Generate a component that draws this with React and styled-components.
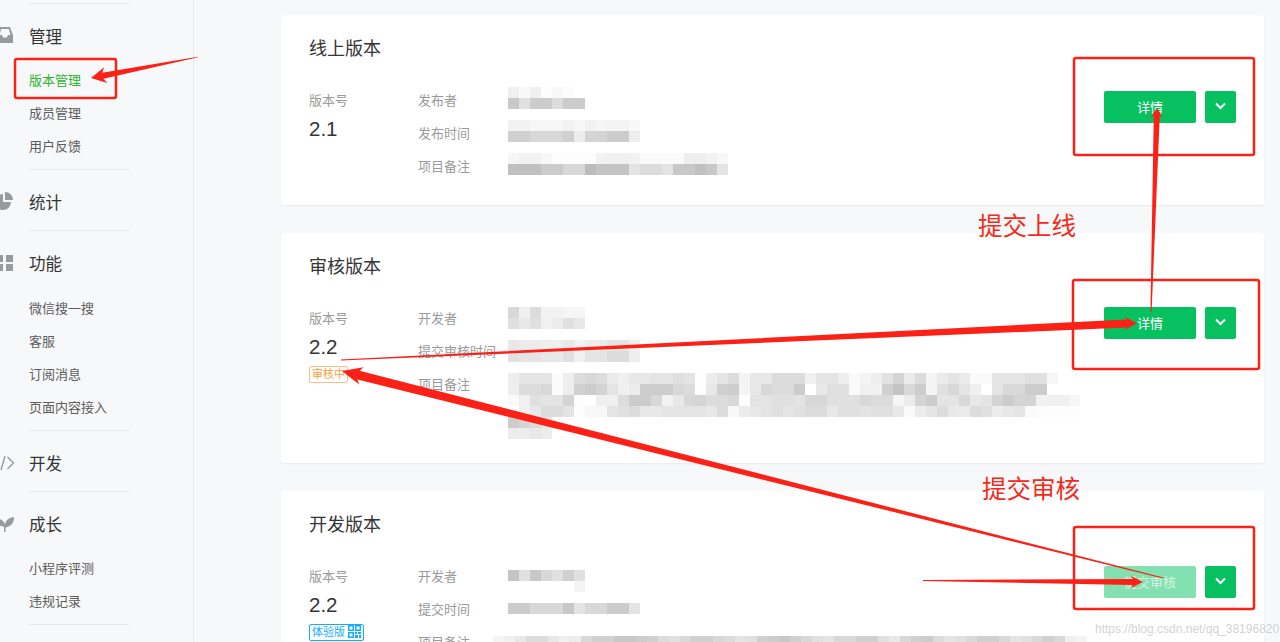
import React from "react";
import styled, { createGlobalStyle } from "styled-components";

const GlobalStyle = createGlobalStyle`
  html, body {
    margin: 0;
    height: 642px;
    overflow: hidden;
    background: #f6f8f9;
  }
  body {
    font-family: "Noto Sans CJK SC", "Noto Sans", sans-serif;
  }
`;

const Page = styled.div`
  position: relative;
  display: flex;
  width: 1280px;
  height: 642px;
  overflow: hidden;
  background: #f6f8f9;
`;

const Sidebar = styled.nav`
  flex: none;
  width: 193px;
  height: 100%;
  box-sizing: content-box;
  padding-top: 3px;
  border-right: 1px solid #e7e8ec;
`;

const Section = styled.section`
  margin-left: 29px;
  width: 100px;
  border-top: 1px solid #e7e7eb;
  padding-top: 18px;
`;

const Heading = styled.div`
  display: flex;
  align-items: center;
  height: 28px;
  margin: 0 0 14px -29px;
  width: 129px;
  font-size: 16.5px;
  color: #353535;
  white-space: nowrap;
`;

const IconSlot = styled.span`
  display: flex;
  flex: none;
  width: 29px;
  height: 28px;
  align-items: center;
  color: #9a9a9a;
`;

const SubList = styled.div`
  padding: ${(p) => p.$lead}px 0 5px;
`;

const SubItem = styled.div`
  height: 33px;
  line-height: 30px;
  font-size: 13px;
  white-space: nowrap;
  color: ${(p) => (p.$active ? "#2fb52f" : "#5c5c5c")};
`;

const Main = styled.main`
  flex: none;
  width: 983px;
  margin-left: 87px;
  padding-top: 15px;
  display: flex;
  flex-direction: column;
  gap: 28px;
`;

const Card = styled.article`
  flex: none;
  box-sizing: border-box;
  height: ${(p) => p.$height}px;
  padding: 22px 28px;
  background: #fff;
  border-radius: 3px;
  box-shadow: 0 1px 2px rgba(0, 0, 0, 0.06);
`;

const CardTitle = styled.h2`
  height: 24px;
  margin: 0 0 24px;
  font-size: 18px;
  font-weight: 400;
  line-height: 21px;
  color: #353535;
`;

const CardBody = styled.div`
  display: flex;
  align-items: flex-start;
`;

const VersionCol = styled.div`
  flex: none;
  width: 109px;
`;

const Label = styled.div`
  flex: none;
  width: 90px;
  height: 33px;
  line-height: 30px;
  font-size: 13px;
  color: #9a9a9a;
  white-space: nowrap;
`;

const VersionNumber = styled.div`
  margin-top: -1px;
  height: 24px;
  line-height: 24px;
  font-family: "Liberation Sans", sans-serif;
  font-size: 20.5px;
  color: #353535;
`;

const Badge = styled.span`
  display: inline-flex;
  align-items: center;
  gap: 3px;
  box-sizing: border-box;
  height: 17px;
  margin-top: 6px;
  padding: 0 2px 1px;
  font-size: 11px;
  line-height: 15px;
  border-radius: 2px;
  border: 1px solid ${(p) => p.$line};
  color: ${(p) => p.$ink};
`;

const Details = styled.div`
  flex: 1;
  min-width: 0;
`;

const DetailRow = styled.div`
  display: flex;
  align-items: flex-start;
  min-height: 33px;
`;

const Mosaic = styled.div`
  display: grid;
  grid-template-columns: repeat(${(p) => p.$cols}, 11px);
  grid-auto-rows: 11px;
  margin: ${(p) => p.$top}px 0 0 ${(p) => p.$left || 0}px;
  filter: blur(0.4px);
`;

const Actions = styled.div`
  flex: none;
  display: flex;
  gap: 9px;
  margin-top: ${(p) => p.$top}px;
`;

const Button = styled.button`
  flex: none;
  width: ${(p) => (p.$small ? "31px" : "92px")};
  height: 32px;
  padding: 0 0 2px;
  display: flex;
  align-items: center;
  justify-content: center;
  border: 0;
  border-radius: 2px;
  background: ${(p) => (p.$disabled ? "#83e0b0" : "#07c160")};
  color: ${(p) => (p.$disabled ? "rgba(255,255,255,0.65)" : "#fff")};
  font-family: inherit;
  font-size: 13px;
`;

const Overlay = styled.svg`
  position: absolute;
  left: 0;
  top: 0;
  pointer-events: none;
`;

const Note = styled.div`
  position: absolute;
  left: ${(p) => p.$x}px;
  top: ${(p) => p.$y}px;
  font-size: 24.5px;
  line-height: 32px;
  color: #f5291a;
  white-space: nowrap;
`;

const Watermark = styled.div`
  position: absolute;
  left: 1095px;
  top: 621px;
  font-family: "Liberation Sans", sans-serif;
  font-size: 12px;
  line-height: 17px;
  color: rgba(190, 190, 190, 0.7);
  white-space: nowrap;
`;

const InboxIcon = () => (
  <svg width="16" height="16" viewBox="0 0 16 16" style={{ margin: "-2px 0 0 -3px" }}>
    <path fill="currentColor" d="M3 0h10l3 8v8H0V8zM2.5 8H5l1.2 2.5h3.6L11 8h2.5L11.8 2H4.2z" fillRule="evenodd" />
  </svg>
);

const PieIcon = () => (
  <svg width="18" height="18" viewBox="0 0 18 18" style={{ margin: "-2px 0 0 -5px" }}>
    <path fill="currentColor" d="M8 2v8h8a8 8 0 1 1-8-8zM10 0a8 8 0 0 1 8 8h-8z" />
  </svg>
);

const GridIcon = () => (
  <svg width="17" height="16" viewBox="0 0 17 16" style={{ marginLeft: -4 }}>
    <path fill="currentColor" d="M0 0h7v7H0zM10 0h7v7h-7zM0 9h7v7H0zM10 9h7v7h-7z" />
  </svg>
);

const CodeIcon = () => (
  <svg width="20" height="16" viewBox="0 0 20 16" style={{ marginLeft: -6 }}>
    <path fill="none" stroke="currentColor" strokeWidth="1.4" d="M4 3 -1 8l5 5M11 1 7 15M13.500 2l6 6-6 6" />
  </svg>
);

const SproutIcon = () => (
  <svg width="20" height="16" viewBox="0 0 20 16" style={{ marginLeft: -6 }}>
    <path fill="currentColor" d="M10 16v-5.500C5 10.500 1.500 8 1 2c5 0 9 2.500 10 6.500C11.800 4 15 1.500 20 1c0 6-3 9.500-8.500 10.500V16z" />
  </svg>
);

const Chevron = () => (
  <svg width="11" height="8" viewBox="0 0 11 8">
    <path fill="none" stroke="#fff" strokeWidth="2" d="M1 1.500 5.500 6 10 1.500" />
  </svg>
);

const QrIcon = () => (
  <svg width="13" height="13" viewBox="0 0 13 13">
    <path fill="currentColor" d="M0 0h6v6H0zM7 0h6v6H7zM0 7h6v6H0zM7 7h2v2H7zM10 7h3v2h-3zM7 10h3v3H7zM11 10h2v3h-2z" />
    <path fill="#fff" d="M1.500 1.500h3v3h-3zM8.500 1.500h3v3h-3zM1.500 8.500h3v3h-3z" />
  </svg>
);

// taper arrow: thin at the tail, wide at the head
const arrowPoints = ([x1, y1], [x2, y2], tailW, shaftW, headLen, headW) => {
  const len = Math.hypot(x2 - x1, y2 - y1);
  const ux = (x2 - x1) / len;
  const uy = (y2 - y1) / len;
  const at = (along, side) => `${x2 - ux * along - uy * side},${y2 - uy * along + ux * side}`;
  return [
    at(len, tailW / 2),
    at(headLen - 3, shaftW / 2),
    at(headLen, headW / 2),
    at(0, 0),
    at(headLen, -headW / 2),
    at(headLen - 3, -shaftW / 2),
    at(len, -tailW / 2),
  ].join(" ");
};

const arrows = [
  [[198, 57], [91, 78], 0.6, 6, 15, 16],
  [[1151, 312], [1157, 108], 1.2, 6, 10, 13],
  [[341, 360], [1137, 323], 1, 8, 13, 14],
  [[1163, 578], [342, 371], 1, 9, 20, 18],
  [[923, 580.5], [1143, 582], 0.8, 6, 13, 13],
];

const boxes = [
  [15, 59, 101, 39],
  [1074, 58, 180, 97],
  [1073, 280, 186, 89],
  [1074, 527, 180, 82],
];

const mosaics = {
  a1: ["f0 f8 f0 fd f8 fc ff", "c8 e0 cc cc dc cc cc"],
  a2: ["f2 f2 f6 f6 f6 f2 f6 f2 f6 f4 f4 f8", "d0 d0 d8 d8 d8 d0 ec d4 d4 cc cc ee"],
  a3: [
    "f6 f2 f2 f8 fc fc fc fc f2 f0 f0 f2 fa fa fa fa ee ee f2 f8",
    "c0 c0 c0 cc cc d8 d8 bc c4 c4 c4 e4 dc dc e4 c8 c8 c0 c8 e4",
  ],
  b1: ["d8 f0 dc f2 f2 f6 f6", "e0 e8 e0 f0 ec e0 e8"],
  b2: ["e8 ec ec ee ee e8 f2 ec ec e4 e4 f0", "e0 e4 e4 e8 e8 e0 f0 e4 e4 dc dc ee"],
  b3: [
    "ee e4 e4 e4 fb ee dc d8 dc ea f0 e8 e8 e4 e4 e0 e4 fe ec e4 dc f4 e8 e8 dc dc dc f0 e4 e4 ee fa f4 ee e2 d4 ea dc f4 ea e4 ea fa fa e4 e4 e4 e0 e0 f6",
    "ee dc dc d8 fb ee d0 cc d4 e4 f0 ec cc cc cc d8 dc fe e8 d0 cc f4 e8 d8 dc dc cc ff e8 e0 e0 fa f0 f0 d0 c4 d8 cc f4 e0 d8 e4 f0 ff e4 d8 d8 cc cc ff",
    "fa f0 e0 e4 e4 d4 fc ff f0 f0 dc cc cc d8 f2 e8 d8 d4 dc dc d8 fe e4 e4 e0 e0 e4 d8 d8 e0 e0 e0 d8 dc dc f6 ec d4 cc e4 e4 d8 e8 e4 d4 cc d4 d4 f2 f0 f0 f6",
    "ff f0 e8 dc dc e4 fc f8 f8 e4 e0 dc e8 e8 e4 e4 e4 e4 e8 dc f8 ec e8 e4 e0 e4 e0 dc dc e8 e0 e0 e4 e0 e0 e8 fa ec e4 dc e8 ea dc e0 ec e8 e4 fa fc fc fc fc",
    "cc d4 dc e4",
    "ec ec e8 ec",
  ],
  c1: ["c4 e0 c8 d8 e0 d0 e0", "ff ff ff ff ff ff f4"],
  c2: ["cc cc d8 d8 d8 c8 e4 d8 d8 cc cc e4"],
  c3: [
    "f4 f0 e8 dc dc e8 f0 ec d8 d0 d0 c8 c8 cc d0 dc e0 d8 d0 d0 d8 dc e4 e0 d0 cc c8 d0 d8 e0 e4 d8 d8 d0 d0 e0 e8 d8 d0 cc dc e4 e0 d8 d0 d0 d8 e4 e0 d8 d0 d8 f0 f4",
  ],
};

const Blur = ({ rows, top, left }) => {
  const cols = Math.max(...rows.map((r) => r.split(" ").length));
  return (
    <Mosaic $cols={cols} $top={top} $left={left}>
      {rows.map((row, y) => {
        const cells = row.split(" ");
        return Array.from({ length: cols }, (_, x) => (
          <div key={`${y}-${x}`} style={{ background: `#${(cells[x] || "ff").repeat(3)}` }} />
        ));
      })}
    </Mosaic>
  );
};

const nav = [
  { title: "管理", icon: <InboxIcon />, lead: 1, items: ["版本管理", "成员管理", "用户反馈"], active: "版本管理" },
  { title: "统计", icon: <PieIcon /> },
  { title: "功能", icon: <GridIcon />, lead: 2, items: ["微信搜一搜", "客服", "订阅消息", "页面内容接入"] },
  { title: "开发", icon: <CodeIcon /> },
  { title: "成长", icon: <SproutIcon />, lead: 1, items: ["小程序评测", "违规记录"] },
  { title: "", icon: null },
];

const Detail = ({ label, rows, top, left }) => (
  <DetailRow>
    <Label>{label}</Label>
    <Blur rows={rows} top={top} left={left} />
  </DetailRow>
);

export default function App() {
  return (
    <Page>
      <GlobalStyle />
      <Sidebar>
        {nav.map((group) => (
          <Section key={group.title}>
            <Heading>
              <IconSlot>{group.icon}</IconSlot>
              {group.title}
            </Heading>
            {group.items && (
              <SubList $lead={group.lead}>
                {group.items.map((item) => (
                  <SubItem key={item} $active={item === group.active}>
                    {item}
                  </SubItem>
                ))}
              </SubList>
            )}
          </Section>
        ))}
      </Sidebar>

      <Main>
        <Card $height={190}>
          <CardTitle>线上版本</CardTitle>
          <CardBody>
            <VersionCol>
              <Label>版本号</Label>
              <VersionNumber>2.1</VersionNumber>
            </VersionCol>
            <Details>
              <Detail label="发布者" rows={mosaics.a1} top={2} />
              <Detail label="发布时间" rows={mosaics.a2} top={2} />
              <Detail label="项目备注" rows={mosaics.a3} top={2} />
            </Details>
            <Actions $top={6}>
              <Button>详情</Button>
              <Button $small><Chevron /></Button>
            </Actions>
          </CardBody>
        </Card>

        <Card $height={230}>
          <CardTitle>审核版本</CardTitle>
          <CardBody>
            <VersionCol>
              <Label>版本号</Label>
              <VersionNumber>2.2</VersionNumber>
              <Badge $line="#ffbe85" $ink="#fa9d3b">审核中</Badge>
            </VersionCol>
            <Details>
              <Detail label="开发者" rows={mosaics.b1} top={4} />
              <Detail label="提交审核时间" rows={mosaics.b2} top={4} />
              <Detail label="项目备注" rows={mosaics.b3} top={4} />
            </Details>
            <Actions $top={4}>
              <Button>详情</Button>
              <Button $small><Chevron /></Button>
            </Actions>
          </CardBody>
        </Card>

        <Card $height={230}>
          <CardTitle>开发版本</CardTitle>
          <CardBody>
            <VersionCol>
              <Label>版本号</Label>
              <VersionNumber>2.2</VersionNumber>
              <Badge $line="#10aeff" $ink="#10aeff">体验版<QrIcon /></Badge>
            </VersionCol>
            <Details>
              <Detail label="开发者" rows={mosaics.c1} top={9} />
              <Detail label="提交时间" rows={mosaics.c2} top={9} />
              <Detail label="项目备注" rows={mosaics.c3} top={9} left={-15} />
            </Details>
            <Actions $top={5}>
              <Button $disabled>提交审核</Button>
              <Button $small><Chevron /></Button>
            </Actions>
          </CardBody>
        </Card>
      </Main>

      <Overlay width="1280" height="642" viewBox="0 0 1280 642">
        {boxes.map(([x, y, w, h]) => (
          <rect key={`${x}-${y}`} x={x} y={y} width={w} height={h} rx="2" fill="none" stroke="#fb2116" strokeWidth="2.5" />
        ))}
        {arrows.map(([from, to, tailW, shaftW, headLen, headW]) => (
          <polygon key={`${from}`} points={arrowPoints(from, to, tailW, shaftW, headLen, headW)} fill="#fb2116" />
        ))}
      </Overlay>
      <Note $x={978} $y={209}>提交上线</Note>
      <Note $x={982} $y={472}>提交审核</Note>
      <Watermark>https://blog.csdn.net/qq_38196820</Watermark>
    </Page>
  );
}
